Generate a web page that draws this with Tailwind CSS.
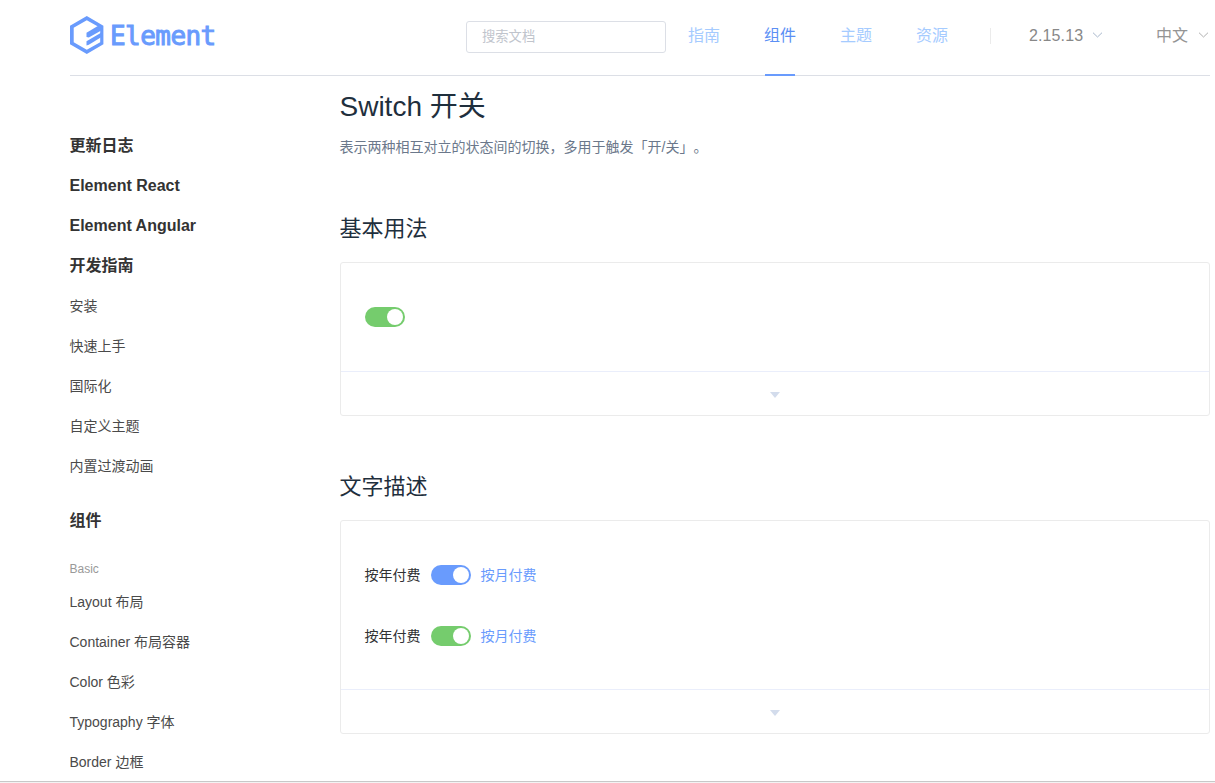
<!DOCTYPE html>
<html lang="zh-CN">
<head>
<meta charset="utf-8">
<title>Switch 开关 - Element</title>
<script src="https://cdn.jsdelivr.net/npm/@tailwindcss/browser@4"></script>
</head>
<body class="bg-white">
<div class="flex h-[783px] w-[1215px] flex-col overflow-hidden bg-white font-['Liberation_Sans','Noto_Sans_CJK_SC',sans-serif] whitespace-nowrap">
  <header class="ml-[70px] flex h-[76px] w-[1140px] shrink-0 border-b border-[#dcdfe6]">
    <a class="flex h-[69px] w-[396px] items-center">
      <svg class="h-[40px] w-[36px]" viewBox="0 0 36 40" fill="#699bfd">
        <path fill-rule="evenodd" d="M16.8 1 L33.4 10.7 V29.3 L16.8 39 L0 29.3 V10.7 Z M16.8 5.2 L3.7 12.8 V27.2 L16.8 34.8 L30.2 27.2 V12.8 Z"/>
        <path d="M16.5 17.8 L29.5 10 L33 12 V14.6 L18.8 22.4 L16.5 22 Z"/>
        <path d="M16.5 26.3 L31.5 17.4 V21.9 L18.8 29.8 L16.5 30.6 Z"/>
      </svg>
      <span class="mt-[3px] ml-[4px] font-['DejaVu_Sans_Mono',monospace] text-[26px] leading-none tracking-[-0.55px] text-[#699bfd] [-webkit-text-stroke:1px_#699bfd]">Element</span>
    </a>
    <div class="mt-[21px] flex h-8 w-[200px] items-center rounded-[3px] border border-[#dcdfe6] pl-[15px] text-[13.3px] text-[#c0c4cc]">搜索文档</div>
    <nav class="ml-[22px] flex gap-[44px] text-[16px] leading-[72px] text-[#a5cbff]">
      <a>指南</a>
      <a class="relative text-[#5b8ff5]">组件<span class="absolute top-[74px] left-[1px] h-[2px] w-[30px] bg-[#699bfd]"></span></a>
      <a>主题</a>
      <a>资源</a>
    </nav>
    <span class="mt-[28px] ml-[42px] h-4 w-px bg-[#ebebeb]"></span>
    <div class="ml-[38px] flex h-[70px] w-[127px] items-center gap-[9px] text-[16px] text-[#888]">
      <span class="pt-[2px] tracking-[0.1px]">2.15.13</span>
      <svg class="h-[6px] w-[11px]" viewBox="0 0 11 6" fill="none" stroke="#a8b8cc"><path d="M1 .7 5.5 5 10 .7"/></svg>
    </div>
    <div class="flex h-[70px] items-center gap-[10px] text-[16px] text-[#949494]">
      <span class="pt-[2px]">中文</span>
      <svg class="h-[6px] w-[11px]" viewBox="0 0 11 6" fill="none" stroke="#b0b0b0"><path d="M1 .7 5.5 5 10 .7"/></svg>
    </div>
  </header>
  <div class="flex h-[705px] shrink-0 overflow-hidden">
    <aside class="w-[339px] shrink-0 pt-[50px] pl-[69.5px] text-[14px] leading-[40px] text-[#4a4a4a]">
      <ul class="text-[16px] font-bold text-[#333]">
        <li>更新日志</li>
        <li>Element React</li>
        <li>Element Angular</li>
        <li>开发指南</li>
      </ul>
      <ul>
        <li>安装</li>
        <li>快速上手</li>
        <li>国际化</li>
        <li>自定义主题</li>
        <li>内置过渡动画</li>
      </ul>
      <div class="mt-[15px] text-[16px] font-bold text-[#333]">组件</div>
      <div class="mt-[15px] h-[26px] text-[12px] leading-[26px] text-[#999]">Basic</div>
      <ul>
        <li>Layout 布局</li>
        <li>Container 布局容器</li>
        <li>Color 色彩</li>
        <li>Typography 字体</li>
        <li>Border 边框</li>
      </ul>
    </aside>
    <main class="w-[871px] pl-px text-[#1f2f3d]">
      <h2 class="-ml-[0.5px] pt-[11px] text-[28px] leading-[40px]">Switch 开关</h2>
      <p class="-ml-[0.5px] mt-[10px] text-[14px] leading-[20px] text-[#6b788b] [text-spacing-trim:space-all]">表示两种相互对立的状态间的切换，多用于触发「开/关」。</p>
      <h3 class="-ml-[0.5px] mt-[57px] text-[22px] leading-[30px]">基本用法</h3>
      <section class="mt-[18px] h-[154px] rounded-[3px] border border-[#ebebeb]">
        <div class="flex h-[108px] items-center pl-[24px]">
          <span class="flex h-5 w-10 items-center justify-end rounded-full bg-[#75cc6d] pr-[2px]"><i class="size-4 rounded-full bg-white"></i></span>
        </div>
        <div class="flex h-[44px] justify-center border-t border-[#eaeefb] pt-[20px]">
          <svg class="mr-px h-[6px] w-[10px]" viewBox="0 0 10 6" fill="#d3dcec"><path d="M0 0H10L5 6Z"/></svg>
        </div>
      </section>
      <h3 class="-ml-[0.5px] mt-[56px] text-[22px] leading-[30px]">文字描述</h3>
      <section class="mt-[18px] h-[214px] rounded-[3px] border border-[#ebebeb]">
        <div class="flex h-[168px] flex-col gap-[41px] pt-[44px] pl-[23.5px] text-[14px] leading-[20px] text-[#303133]">
          <div class="flex h-5 items-center gap-[10px]">
            <span>按年付费</span>
            <span class="flex h-5 w-10 items-center justify-end rounded-full bg-[#699bfd] pr-[2px]"><i class="size-4 rounded-full bg-white"></i></span>
            <span class="text-[#699bfd]">按月付费</span>
          </div>
          <div class="flex h-5 items-center gap-[10px]">
            <span>按年付费</span>
            <span class="flex h-5 w-10 items-center justify-end rounded-full bg-[#75cc6d] pr-[2px]"><i class="size-4 rounded-full bg-white"></i></span>
            <span class="text-[#699bfd]">按月付费</span>
          </div>
        </div>
        <div class="flex h-[44px] justify-center border-t border-[#eaeefb] pt-[20px]">
          <svg class="mr-px h-[6px] w-[10px]" viewBox="0 0 10 6" fill="#d3dcec"><path d="M0 0H10L5 6Z"/></svg>
        </div>
      </section>
    </main>
  </div>
  <div class="h-[2px] shrink-0 border-t border-[#c8c8c8] bg-[#f3f3f3]"></div>
</div>
</body>
</html>
